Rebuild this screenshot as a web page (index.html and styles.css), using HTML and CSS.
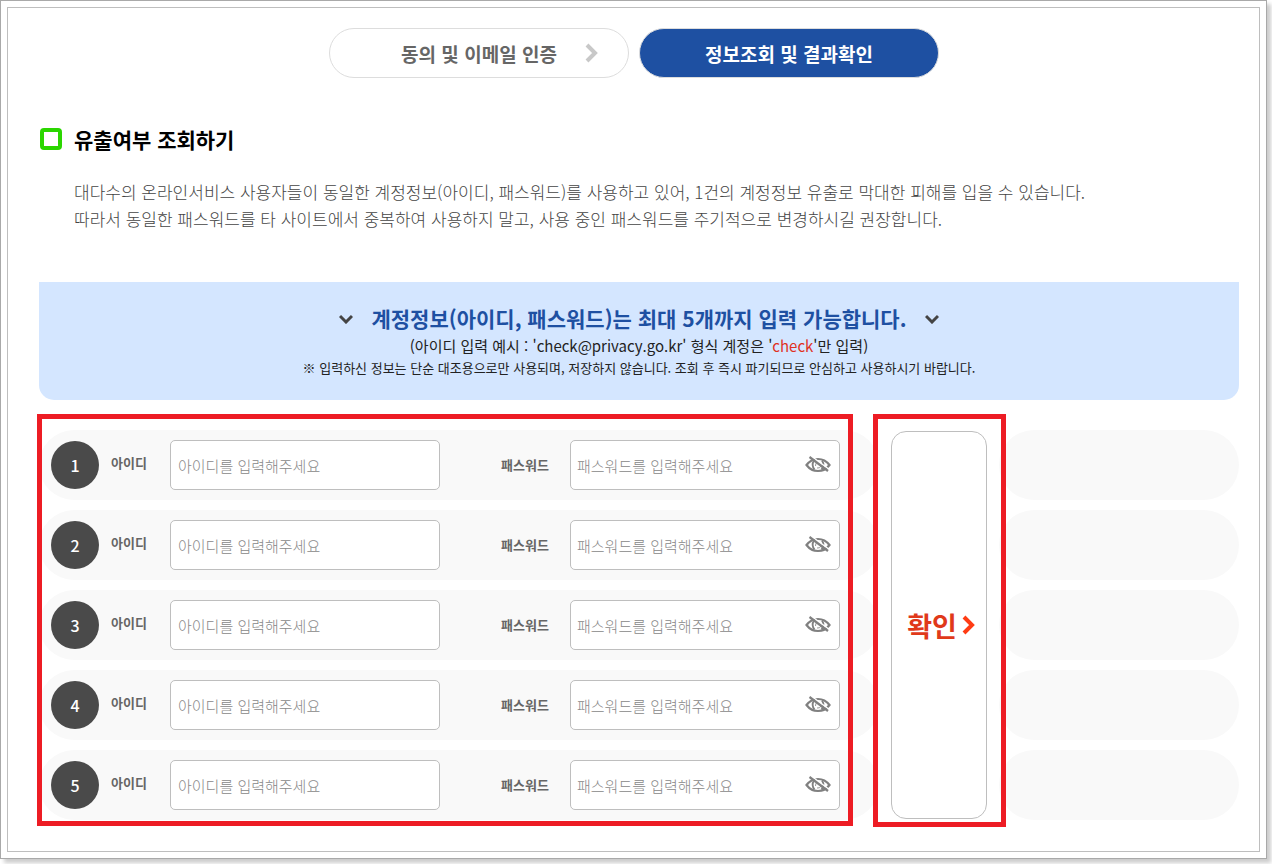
FILE: index.html
```html
<!DOCTYPE html>
<html lang="ko">
<head>
    <meta charset="UTF-8">
    <meta name="viewport" content="width=device-width, initial-scale=1.0">
    <title>유출여부 조회하기</title>
    <link rel="stylesheet" href="styles.css">
</head>

<body>
    <!-- 공통 아이콘 -->
    <svg class="sprite" aria-hidden="true">
        <symbol id="eye-off" viewBox="0 0 26 18">
            <path d="M1.500 9Q6 3 13 3T24.500 9Q20 15 13 15T1.500 9Z" fill="none" stroke="#808080" stroke-width="2.200"/>
            <path d="M9 4.500Q6 9 9.500 13.500M17 4.500Q20 9 16.500 13.500" fill="none" stroke="#808080" stroke-width="1.800"/>
            <path d="M13 6Q10 7 10.500 10M12 12Q15 12.500 16 10" fill="none" stroke="#999" stroke-width="1"/>
            <path d="M6 0L25 14" stroke="#fff" stroke-width="1.500"/>
            <path d="M4.500 1L23 15" stroke="#808080" stroke-width="2.200"/>
        </symbol>
    </svg>

    <div class="frame">
        <main class="page">
            <!-- 진행 단계 -->
            <nav class="steps">
                <a href="#" class="step">동의 및 이메일 인증
                    <svg class="step-arrow" viewBox="0 0 14 20"><path d="M2 2l8 8-8 8" fill="none" stroke="#c8c8c8" stroke-width="4"/></svg>
                </a>
                <a href="#" class="step active" aria-current="step">정보조회 및 결과확인</a>
            </nav>

            <section class="intro">
                <h1>유출여부 조회하기</h1>
                <p>대다수의 온라인서비스 사용자들이 동일한 계정정보(아이디, 패스워드)를 사용하고 있어, 1건의 계정정보 유출로 막대한 피해를 입을 수 있습니다.<br>
                따라서 동일한 패스워드를 타 사이트에서 중복하여 사용하지 말고, 사용 중인 패스워드를 주기적으로 변경하시길 권장합니다.</p>
            </section>

            <!-- 입력 안내 -->
            <section class="notice">
                <h2>
                    <svg class="chevron" viewBox="0 0 14 10"><path d="M1 2l6 6 6-6" fill="none" stroke="#444" stroke-width="3"/></svg>
                    <span>계정정보(아이디, 패스워드)는 최대 5개까지 입력 가능합니다.</span>
                    <svg class="chevron" viewBox="0 0 14 10"><path d="M1 2l6 6 6-6" fill="none" stroke="#444" stroke-width="3"/></svg>
                </h2>
                <p class="example">(아이디 입력 예시 : 'check@privacy.go.kr' 형식 계정은 '<em>check</em>'만 입력)</p>
                <p class="caution">※ 입력하신 정보는 단순 대조용으로만 사용되며, 저장하지 않습니다. 조회 후 즉시 파기되므로 안심하고 사용하시기 바랍니다.</p>
            </section>

            <form class="check-form">
                <div class="accounts">
                    <div class="row">
                        <span class="num">1</span>
                        <label class="id-label" for="id1">아이디</label>
                        <input type="text" id="id1" placeholder="아이디를 입력해주세요">
                        <label class="pw-label" for="pw1">패스워드</label>
                        <div class="pw-box">
                            <input type="password" id="pw1" placeholder="패스워드를 입력해주세요">
                            <button type="button" class="eye" aria-label="패스워드 보기"><svg><use href="#eye-off"/></svg></button>
                        </div>
                    </div>
                    <div class="row">
                        <span class="num">2</span>
                        <label class="id-label" for="id2">아이디</label>
                        <input type="text" id="id2" placeholder="아이디를 입력해주세요">
                        <label class="pw-label" for="pw2">패스워드</label>
                        <div class="pw-box">
                            <input type="password" id="pw2" placeholder="패스워드를 입력해주세요">
                            <button type="button" class="eye" aria-label="패스워드 보기"><svg><use href="#eye-off"/></svg></button>
                        </div>
                    </div>
                    <div class="row">
                        <span class="num">3</span>
                        <label class="id-label" for="id3">아이디</label>
                        <input type="text" id="id3" placeholder="아이디를 입력해주세요">
                        <label class="pw-label" for="pw3">패스워드</label>
                        <div class="pw-box">
                            <input type="password" id="pw3" placeholder="패스워드를 입력해주세요">
                            <button type="button" class="eye" aria-label="패스워드 보기"><svg><use href="#eye-off"/></svg></button>
                        </div>
                    </div>
                    <div class="row">
                        <span class="num">4</span>
                        <label class="id-label" for="id4">아이디</label>
                        <input type="text" id="id4" placeholder="아이디를 입력해주세요">
                        <label class="pw-label" for="pw4">패스워드</label>
                        <div class="pw-box">
                            <input type="password" id="pw4" placeholder="패스워드를 입력해주세요">
                            <button type="button" class="eye" aria-label="패스워드 보기"><svg><use href="#eye-off"/></svg></button>
                        </div>
                    </div>
                    <div class="row">
                        <span class="num">5</span>
                        <label class="id-label" for="id5">아이디</label>
                        <input type="text" id="id5" placeholder="아이디를 입력해주세요">
                        <label class="pw-label" for="pw5">패스워드</label>
                        <div class="pw-box">
                            <input type="password" id="pw5" placeholder="패스워드를 입력해주세요">
                            <button type="button" class="eye" aria-label="패스워드 보기"><svg><use href="#eye-off"/></svg></button>
                        </div>
                    </div>
                </div>

                <div class="confirm">
                    <button type="submit" class="confirm-button">확인
                        <svg class="confirm-arrow" viewBox="0 0 14 20"><path d="M2 2l8 8-8 8" fill="none" stroke="#ff3c14" stroke-width="4"/></svg>
                    </button>
                </div>

                <!-- 결과 영역 -->
                <div class="results">
                    <div class="result"></div>
                    <div class="result"></div>
                    <div class="result"></div>
                    <div class="result"></div>
                    <div class="result"></div>
                </div>
            </form>
        </main>
    </div>
</body>
</html>
```
FILE: styles.css
```css
*, *::before, *::after {
    box-sizing: border-box;
}

body {
    margin: 0;
    font-family: "Noto Sans CJK KR", "Noto Sans", sans-serif;
    background-color: #fff;
    color: #222;
}

h1, h2, p {
    margin: 0;
}

.sprite {
    display: none;
}

/* 바깥 테두리 */
.frame {
    margin: 0 5px 5px 0;
    padding: 6px;
    border: 1px solid #a9a9a9;
    box-shadow: 4px 4px 4px rgba(0, 0, 0, 0.2);
}

.page {
    padding: 20px 20px 31px 31px;
    border: 1px solid #bebebe;
}

/* 진행 단계 */
.steps {
    display: flex;
    justify-content: center;
    gap: 10px;
    padding-right: 10px;
}

.step {
    display: flex;
    align-items: center;
    justify-content: center;
    width: 300px;
    height: 50px;
    border: 1px solid #ddd;
    border-radius: 25px;
    color: #666;
    font-size: 19px;
    font-weight: bold;
    text-decoration: none;
}

.step:first-child {
    padding-left: 42px;
}

.step-arrow {
    width: 14px;
    height: 20px;
    margin-left: 28px;
}

.step.active {
    background-color: #1e50a2;
    color: #fff;
}

/* 제목과 설명 */
.intro {
    padding: 46px 0 50px 1px;
}

h1 {
    display: flex;
    align-items: center;
    gap: 12px;
    color: #000;
    font-size: 21px;
    font-weight: bold;
    line-height: 30px;
}

h1::before {
    content: "";
    width: 22px;
    height: 22px;
    border: 4px solid #2bd600;
    border-radius: 4px;
}

.intro p {
    padding: 24px 0 0 34px;
    color: #444;
    font-size: 17px;
    font-weight: 300;
    line-height: 27px;
}

/* 입력 안내 */
.notice {
    padding: 21px 0;
    border-radius: 0 0 15px 15px;
    background-color: #d4e6ff;
    text-align: center;
}

h2 {
    display: flex;
    align-items: center;
    justify-content: center;
    gap: 18px;
    color: #1e50a2;
    font-size: 21px;
    font-weight: bold;
    line-height: 31px;
}

.chevron {
    width: 14px;
    height: 10px;
}

.example {
    font-size: 15px;
    line-height: 23px;
}

.example em {
    color: #e0301e;
    font-style: normal;
}

.caution {
    font-size: 13px;
    line-height: 22px;
}

/* 계정 입력 */
.check-form {
    display: flex;
    padding-top: 30px;
}

.accounts, .results {
    display: flex;
    flex-direction: column;
    gap: 10px;
}

.accounts {
    position: relative;
    flex: 7;
}

.results {
    flex: 2;
}

.row, .result {
    height: 70px;
    border-radius: 35px;
    background-color: #f9f9f9;
}

.row {
    display: grid;
    grid-template-columns: 48px 71px 1fr 130px 1fr;
    align-items: center;
    padding: 0 39px 0 12px;
}

.num {
    height: 48px;
    border-radius: 50%;
    background-color: #4a4a4a;
    color: #fff;
    font-size: 16px;
    font-weight: 500;
    line-height: 48px;
    text-align: center;
}

.row label {
    color: #666;
    font-size: 13px;
    font-weight: bold;
}

.id-label {
    padding: 0 0 6px 12px;
}

.pw-label {
    padding: 0 0 2px 61px;
}

.row input {
    width: 100%;
    height: 50px;
    padding: 0 7px;
    border: 1px solid #bebebe;
    border-radius: 5px;
    background-color: #fff;
    font-family: inherit;
    font-size: 15px;
    font-weight: 300;
}

.row input::placeholder {
    color: #888;
    opacity: 1;
}

.pw-box {
    position: relative;
}

.row .pw-box input {
    padding: 0 44px 0 6px;
}

.eye {
    position: absolute;
    top: 16px;
    right: 9px;
    width: 26px;
    height: 18px;
    padding: 0;
    border: none;
    background: none;
    cursor: pointer;
}

.eye svg {
    display: block;
    width: 26px;
    height: 18px;
}

/* 확인 버튼 */
.confirm {
    position: relative;
    width: 120px;
    padding: 1px 12px;
}

.confirm-button {
    display: flex;
    align-items: center;
    justify-content: center;
    gap: 5px;
    width: 100%;
    height: 100%;
    padding: 0 0 0 5px;
    border: 1px solid #bebebe;
    border-radius: 15px;
    background-color: #fff;
    color: #e0391a;
    font-family: inherit;
    font-size: 27px;
    font-weight: bold;
    cursor: pointer;
}

.confirm-arrow {
    width: 14px;
    height: 20px;
}

/* 빨간 강조 테두리 */
.accounts::after, .confirm::after {
    content: "";
    position: absolute;
    border: 5px solid #ed1c24;
    pointer-events: none;
}

.accounts::after {
    inset: -16px 26px -6px -2px;
}

.confirm::after {
    inset: -16px -7px -7px -6px;
}
```
